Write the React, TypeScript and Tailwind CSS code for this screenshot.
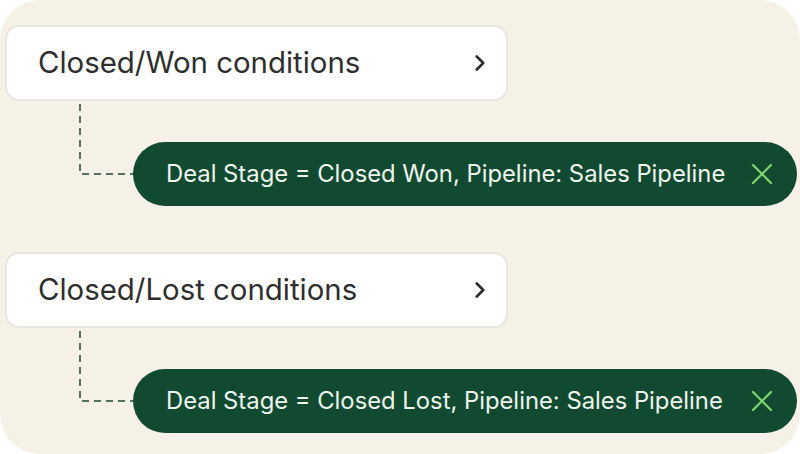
import { ChevronRight, X } from "lucide-react";

const rules = [
  { title: "Closed/Won conditions", filter: "Deal Stage = Closed Won, Pipeline: Sales Pipeline" },
  { title: "Closed/Lost conditions", filter: "Deal Stage = Closed Lost, Pipeline: Sales Pipeline" },
];

function Connector() {
  return (
    <svg width="54" height="74" viewBox="0 0 54 74" className="ml-[79px] shrink-0" aria-hidden="true">
      <path
        d="M1 3 V73 H54"
        fill="none"
        stroke="#1d4a33"
        strokeWidth="1.5"
        strokeDasharray="7 5"
      />
    </svg>
  );
}

function RuleGroup({ title, filter }: { title: string; filter: string }) {
  return (
    <div className="flex flex-col">
      <div className="ml-[5px] flex h-[76px] w-[503px] items-center justify-between rounded-[14px] border-2 border-[#e8e6e1] bg-white pl-[31px] pr-[13px]">
        <span className="text-[29.4px] leading-none text-[#2e2e2e]">{title}</span>
        <ChevronRight size={26} strokeWidth={2.5} className="text-[#2e2e2e]" />
      </div>
      <div className="flex items-start">
        <Connector />
        <div className="mt-[41px] flex h-[64px] w-[664px] items-center justify-between rounded-full bg-[#114a31] pl-[33px] pr-[17px]">
          <span className="text-[23.8px] leading-none text-[#eef4ee]">{filter}</span>
          <X size={36} strokeWidth={1.5} className="text-[#7fd66d]" />
        </div>
      </div>
    </div>
  );
}

export default function App() {
  return (
    <div className="h-[454px] w-[800px] bg-white" style={{ fontFamily: "Inter, 'Noto Sans', sans-serif" }}>
      <div className="flex h-full w-full flex-col gap-[46px] rounded-[40px] bg-[#f6f1e6] pt-[25px]">
        {rules.map((r) => (
          <RuleGroup key={r.title} title={r.title} filter={r.filter} />
        ))}
      </div>
    </div>
  );
}
